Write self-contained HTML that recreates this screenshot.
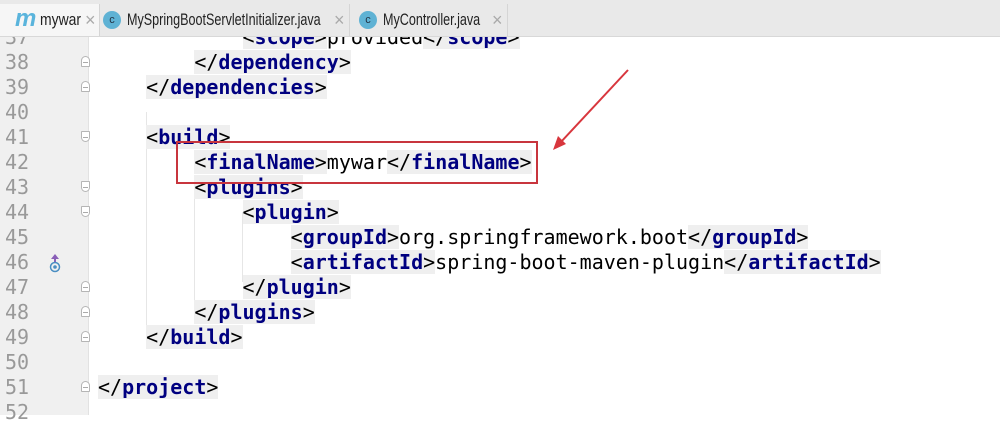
<!DOCTYPE html>
<html><head><meta charset="utf-8"><style>
body{margin:0;width:1000px;height:415px;overflow:hidden;background:#fff;position:relative;font-family:"DejaVu Sans Mono","Liberation Mono",monospace;}
.gut{position:absolute;left:0;top:0;width:88px;height:415px;background:#f0f0f0;border-right:1px solid #e2e2e2;}
.ln{position:absolute;left:5px;font-size:20px;color:#999;line-height:25px;}
.code{position:absolute;left:98px;font-size:20px;line-height:25px;color:#000;white-space:pre;}
.t{background:#efefef;color:#000;}
.t b{color:#000080;}
.fold{position:absolute;left:81px;width:9px;height:11px;border:1px solid #b5b5b5;border-radius:5px 5px 1px 1px;background:#fff;box-sizing:border-box;}
.fold:after{content:"";position:absolute;left:1px;right:1px;top:5px;height:1px;background:#aaa;}
.guide{position:absolute;width:1px;background:#e6e6e6;}
.tabs{position:absolute;left:0;top:0;width:1000px;height:36px;background:#e9e9e9;border-bottom:1px solid #d8d8d8;font-family:"Liberation Sans",sans-serif;}
.tab{position:absolute;top:4px;height:32px;border-right:1px solid #d5d5d5;box-sizing:border-box;}
.tab span{position:absolute;top:0;line-height:32px;white-space:nowrap;font-size:17px;color:#222;}
.sq{transform:scaleX(0.74);transform-origin:0 50%;}
.x{color:#aaa!important;font-size:18px!important;}
.c{width:18px;height:18px;border-radius:9px;background:#5fb2d4;color:#234!important;font-size:11px!important;text-align:center;line-height:18px!important;top:7px!important;}
</style></head><body>
<div class="gut"></div>
<div class="guide" style="left:146px;top:112px;height:222px"></div>
<div class="guide" style="left:194px;top:187px;height:120px"></div>
<div class="guide" style="left:242px;top:212px;height:70px"></div>

<div class="ln" style="top:25px">37</div>
<div class="ln" style="top:50px">38</div>
<div class="ln" style="top:75px">39</div>
<div class="ln" style="top:100px">40</div>
<div class="ln" style="top:125px">41</div>
<div class="ln" style="top:150px">42</div>
<div class="ln" style="top:175px">43</div>
<div class="ln" style="top:200px">44</div>
<div class="ln" style="top:225px">45</div>
<div class="ln" style="top:250px">46</div>
<div class="ln" style="top:275px">47</div>
<div class="ln" style="top:300px">48</div>
<div class="ln" style="top:325px">49</div>
<div class="ln" style="top:350px">50</div>
<div class="ln" style="top:375px">51</div>
<div class="ln" style="top:400px">52</div>

<div class="fold" style="top:56px"></div>
<div class="fold" style="top:81px"></div>
<div class="fold" style="top:131px;border-radius:1px 1px 5px 5px"></div>
<div class="fold" style="top:181px;border-radius:1px 1px 5px 5px"></div>
<div class="fold" style="top:206px;border-radius:1px 1px 5px 5px"></div>
<div class="fold" style="top:281px"></div>
<div class="fold" style="top:306px"></div>
<div class="fold" style="top:331px"></div>
<div class="fold" style="top:381px"></div>
<svg style="position:absolute;left:49px;top:253px" width="12" height="20"><path d="M6 1 L2 6 H5 V10 H7 V6 H10Z" fill="#8a5fb8"/><circle cx="6" cy="14" r="4.5" fill="none" stroke="#4a8ec2" stroke-width="1.5"/><circle cx="6" cy="14" r="1.8" fill="#4a8ec2"/></svg>

<div class="code" style="top:25px">            <span class="t">&lt;<b>scope</b>&gt;</span>provided<span class="t">&lt;/<b>scope</b>&gt;</span></div>
<div class="code" style="top:50px">        <span class="t">&lt;/<b>dependency</b>&gt;</span></div>
<div class="code" style="top:75px">    <span class="t">&lt;/<b>dependencies</b>&gt;</span></div>
<div class="code" style="top:125px">    <span class="t">&lt;<b>build</b>&gt;</span></div>
<div class="code" style="top:150px">        <span class="t">&lt;<b>finalName</b>&gt;</span>mywar<span class="t">&lt;/<b>finalName</b>&gt;</span></div>
<div class="code" style="top:175px">        <span class="t">&lt;<b>plugins</b>&gt;</span></div>
<div class="code" style="top:200px">            <span class="t">&lt;<b>plugin</b>&gt;</span></div>
<div class="code" style="top:225px">                <span class="t">&lt;<b>groupId</b>&gt;</span>org.springframework.boot<span class="t">&lt;/<b>groupId</b>&gt;</span></div>
<div class="code" style="top:250px">                <span class="t">&lt;<b>artifactId</b>&gt;</span>spring-boot-maven-plugin<span class="t">&lt;/<b>artifactId</b>&gt;</span></div>
<div class="code" style="top:275px">            <span class="t">&lt;/<b>plugin</b>&gt;</span></div>
<div class="code" style="top:300px">        <span class="t">&lt;/<b>plugins</b>&gt;</span></div>
<div class="code" style="top:325px">    <span class="t">&lt;/<b>build</b>&gt;</span></div>
<div class="code" style="top:375px"><span class="t">&lt;/<b>project</b>&gt;</span></div>

<div style="position:absolute;left:176px;top:141px;width:362px;height:43px;border:2px solid #c8353d;box-sizing:border-box"></div>
<svg style="position:absolute;left:0;top:0" width="1000" height="415"><line x1="628" y1="70" x2="560" y2="143" stroke="#d8363d" stroke-width="2"/><path d="M553 150 L558 136 L566 144Z" fill="#d8363d"/></svg>

<div class="tabs">
<div class="tab" style="left:0;width:100px;background:#f6f6f6">
<span style="left:15px;color:#5ab4dc;font-style:italic;font-weight:bold;font-size:24px;line-height:30px">m</span>
<span style="left:40px;transform:scaleX(0.82);transform-origin:0 50%">mywar</span><span class="x" style="left:85px">×</span></div>
<div class="tab" style="left:100px;width:250px">
<span class="c" style="left:3px">c</span>
<span class="sq" style="left:27px">MySpringBootServletInitializer.java</span><span class="x" style="left:234px">×</span></div>
<div class="tab" style="left:350px;width:158px">
<span class="c" style="left:9px">c</span>
<span class="sq" style="left:33px">MyController.java</span><span class="x" style="left:142px">×</span></div>
</div>
</body></html>
